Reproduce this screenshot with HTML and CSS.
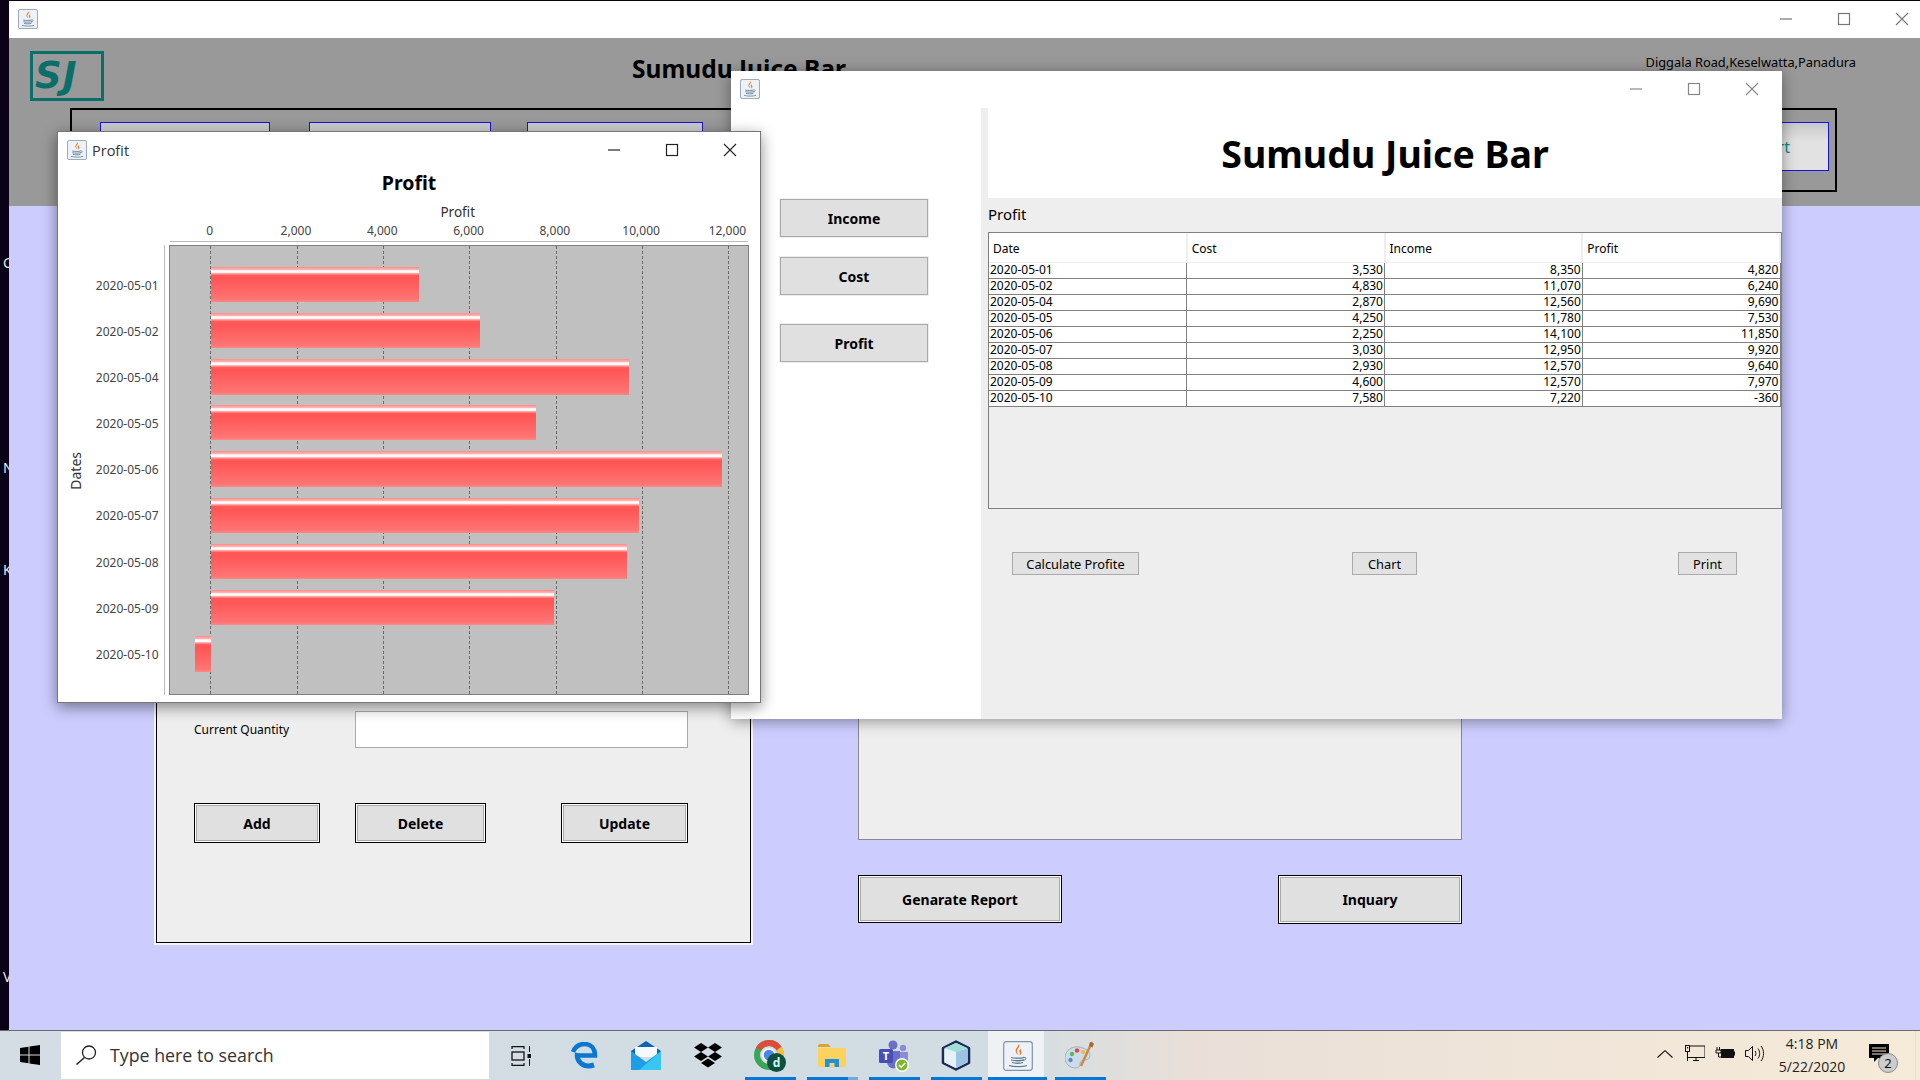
FILE: index.html
```html
<!DOCTYPE html>
<html lang="en">
<head>
<meta charset="utf-8">
<title>Sumudu Juice Bar</title>
<link rel="stylesheet" href="styles.css">
</head>
<body>
<svg class="defs" width="0" height="0" aria-hidden="true">
  <defs>
    <symbol id="java" viewBox="0 0 30 30">
      <rect x="0.7" y="0.7" width="28.6" height="28.6" rx="2.5" fill="#eef2f6" stroke="#7f93aa" stroke-width="1.2"/>
      <path d="M16 3c2 3-3 5-2 8 .4 1.2 1.2 2 1.4 3-2-1.5-3.6-3.400-2.400-6C13.800 6.200 15.600 5 16 3z" fill="#e8761f"/>
      <path d="M18.500 7c-2 1.600-2.800 2.800-1.800 4.600.5 1 .4 2-.4 2.800 2.400-1 2.800-2.800 1.800-4.300-.6-1-.4-2 .4-3.100z" fill="#e8761f"/>
      <path d="M8 16.500c3 1 10 1 13-.2M8 19c3 1 10 1 13-.1M9 21.500c3 1 9 1 11 0" fill="none" stroke="#5c7c94" stroke-width="1.300"/>
      <path d="M21 16.500c2.500-.6 3 2.200-.8 3" fill="none" stroke="#5c7c94" stroke-width="1"/>
      <path d="M6 24.500c5 1.600 14 1.600 18 0" fill="none" stroke="#5c7c94" stroke-width="1.200"/>
    </symbol>
    <symbol id="ctl-min" viewBox="0 0 14 14"><path d="M1 7h12" fill="none" stroke="currentColor" stroke-width="1.200"/></symbol>
    <symbol id="ctl-max" viewBox="0 0 14 14"><rect x="1.500" y="1.500" width="11" height="11" fill="none" stroke="currentColor" stroke-width="1.200"/></symbol>
    <symbol id="ctl-close" viewBox="0 0 14 14"><path d="M1 1l12 12M13 1L1 13" fill="none" stroke="currentColor" stroke-width="1.100"/></symbol>
    <linearGradient id="barfill" x1="0" y1="0" x2="0" y2="1">
      <stop offset="0" stop-color="#ff8a8a"/>
      <stop offset="0.07" stop-color="#ffb0b0"/>
      <stop offset="0.11" stop-color="#ffffff"/>
      <stop offset="0.15" stop-color="#ffffff"/>
      <stop offset="0.19" stop-color="#ffa0a0"/>
      <stop offset="0.24" stop-color="#ff5a5a"/>
      <stop offset="0.32" stop-color="#ff5555"/>
      <stop offset="0.92" stop-color="#ff7474"/>
      <stop offset="1" stop-color="#ff8888"/>
    </linearGradient>
  </defs>
</svg>

<div class="workspace">
  <div class="strip">
    <span class="strip-c">C</span>
    <span class="strip-n">N</span>
    <span class="strip-k">K</span>
    <span class="strip-v">V</span>
  </div>

  <main class="main-window">
    <div class="titlebar">
      <svg class="title-icon"><use href="#java"/></svg>
      <div class="controls controls-main">
        <span class="ctl"><svg><use href="#ctl-min"/></svg></span>
        <span class="ctl"><svg><use href="#ctl-max"/></svg></span>
        <span class="ctl"><svg><use href="#ctl-close"/></svg></span>
      </div>
    </div>

    <header class="app-header">
      <div class="header-top">
        <div class="logo">SJ</div>
        <h1 class="app-title">Sumudu Juice Bar</h1>
        <div class="address">Diggala Road,Keselwatta,Panadura</div>
      </div>
      <nav class="toolbar">
        <button class="nav-btn nav-1"></button>
        <button class="nav-btn nav-2"></button>
        <button class="nav-btn nav-3"></button>
        <button class="nav-btn nav-4"><span>Report</span></button>
      </nav>
    </header>

    <section class="main-body">
      <div class="form-panel">
        <div class="form-row">
          <label class="form-label">Current Quantity</label>
          <div class="form-input"></div>
        </div>
        <div class="form-actions">
          <button class="bevel-btn btn-add">Add</button>
          <button class="bevel-btn btn-delete">Delete</button>
          <button class="bevel-btn btn-update">Update</button>
        </div>
      </div>
      <div class="report-col">
        <div class="report-box"></div>
        <div class="report-actions">
          <button class="bevel-btn btn-report">Genarate Report</button>
          <button class="bevel-btn btn-inquary">Inquary</button>
        </div>
      </div>
    </section>
  </main>
</div>

<section class="income-window">
  <div class="titlebar">
    <svg class="title-icon"><use href="#java"/></svg>
    <div class="controls controls-dim">
      <span class="ctl"><svg><use href="#ctl-min"/></svg></span>
      <span class="ctl"><svg><use href="#ctl-max"/></svg></span>
      <span class="ctl"><svg><use href="#ctl-close"/></svg></span>
    </div>
  </div>
  <div class="income-content">
    <div class="side-menu">
      <button class="side-btn side-income">Income</button>
      <button class="side-btn side-cost">Cost</button>
      <button class="side-btn side-profit">Profit</button>
    </div>
    <div class="profit-pane">
      <div class="banner">Sumudu Juice Bar</div>
      <div class="pane-label">Profit</div>
      <div class="table-box">
        <table class="data-table">
          <thead>
            <tr><th>Date</th><th>Cost</th><th>Income</th><th>Profit</th></tr>
          </thead>
          <tbody>
            <tr><td>2020-05-01</td><td>3,530</td><td>8,350</td><td>4,820</td></tr>
            <tr><td>2020-05-02</td><td>4,830</td><td>11,070</td><td>6,240</td></tr>
            <tr><td>2020-05-04</td><td>2,870</td><td>12,560</td><td>9,690</td></tr>
            <tr><td>2020-05-05</td><td>4,250</td><td>11,780</td><td>7,530</td></tr>
            <tr><td>2020-05-06</td><td>2,250</td><td>14,100</td><td>11,850</td></tr>
            <tr><td>2020-05-07</td><td>3,030</td><td>12,950</td><td>9,920</td></tr>
            <tr><td>2020-05-08</td><td>2,930</td><td>12,570</td><td>9,640</td></tr>
            <tr><td>2020-05-09</td><td>4,600</td><td>12,570</td><td>7,970</td></tr>
            <tr><td>2020-05-10</td><td>7,580</td><td>7,220</td><td>-360</td></tr>
          </tbody>
        </table>
      </div>
      <div class="pane-actions">
        <button class="flat-btn btn-calc">Calculate Profite</button>
        <button class="flat-btn btn-chart">Chart</button>
        <button class="flat-btn btn-print">Print</button>
      </div>
    </div>
  </div>
</section>

<section class="chart-window">
  <div class="titlebar">
    <svg class="title-icon"><use href="#java"/></svg>
    <span class="title-text">Profit</span>
    <div class="controls controls-chart">
      <span class="ctl"><svg><use href="#ctl-min"/></svg></span>
      <span class="ctl"><svg><use href="#ctl-max"/></svg></span>
      <span class="ctl"><svg><use href="#ctl-close"/></svg></span>
    </div>
  </div>
  <div class="chart-title">Profit</div>
  <div class="x-head">
    <div class="x-label">Profit</div>
    <div class="x-ticks">
      <span>0</span><span>2,000</span><span>4,000</span><span>6,000</span><span>8,000</span><span>10,000</span><span>12,000</span>
    </div>
  </div>
  <div class="chart-body">
    <div class="y-label"><span>Dates</span></div>
    <div class="y-cats">
      <span>2020-05-01</span><span>2020-05-02</span><span>2020-05-04</span><span>2020-05-05</span><span>2020-05-06</span><span>2020-05-07</span><span>2020-05-08</span><span>2020-05-09</span><span>2020-05-10</span>
    </div>
    <svg class="plot" viewBox="0 0 580 450" width="580" height="450">
      <rect x="0.500" y="0.500" width="579" height="449" fill="#c0c0c0" stroke="#808080"/>
      <g stroke="#555" stroke-dasharray="3 2" stroke-width="1" opacity="0.8">
        <path d="M41.500 1V449M128.500 1V449M214.500 1V449M300.500 1V449M387.500 1V449M473.500 1V449M559.500 1V449"/>
      </g>
      <g fill="url(#barfill)">
        <rect x="42" y="22" width="208" height="35"/>
        <rect x="42" y="68" width="269" height="35"/>
        <rect x="42" y="114" width="418" height="36"/>
        <rect x="42" y="160" width="325" height="35"/>
        <rect x="42" y="206" width="511" height="36"/>
        <rect x="42" y="253" width="428" height="35"/>
        <rect x="42" y="299" width="416" height="35"/>
        <rect x="42" y="345" width="343" height="35"/>
        <rect x="26" y="391" width="16" height="36"/>
      </g>
    </svg>
  </div>
</section>

<footer class="taskbar">
  <div class="start">
    <svg width="20" height="20" viewBox="0 0 20 20"><path d="M0 3l8.500-1.200V9.500H0zM9.500 1.600L20 0v9.500H9.500zM0 10.500h8.500v7.700L0 17zM9.500 10.500H20V20L9.500 18.400z" fill="#000"/></svg>
  </div>
  <div class="search">
    <svg width="22" height="20" viewBox="0 0 22 20"><circle cx="14" cy="7.500" r="6.500" fill="none" stroke="#222" stroke-width="1.300"/><path d="M9.500 12.500L1.500 19.500" stroke="#222" stroke-width="1.500"/></svg>
    <span>Type here to search</span>
  </div>
  <div class="app app-view">
    <svg width="20" height="20" viewBox="0 0 20 20"><path d="M1 3V.7h12V3M1 17v2.300h12V17" fill="none" stroke="#111" stroke-width="1.200"/><rect x="1" y="6" width="12" height="8" fill="none" stroke="#111" stroke-width="1.300"/><path d="M18.500 0v6M18.500 13v7" stroke="#111"/><rect x="16.500" y="8" width="4" height="4" fill="#111"/></svg>
  </div>
  <div class="app">
    <svg width="27" height="27" viewBox="0 0 27 27"><path d="M7.500 13.500H24C24 6 19.500 2 13.500 2 8 2 4 5 2 10" fill="none" stroke="#0a78d2" stroke-width="4.500"/><path d="M6.500 11C5 19 12 26.500 23 23" fill="none" stroke="#0a78d2" stroke-width="5"/></svg>
  </div>
  <div class="app">
    <svg width="30" height="29" viewBox="0 0 30 29"><path d="M0 10L15 0l15 10v3H0z" fill="#0b64b4"/><path d="M4 6h22v10H4z" fill="#f5f9fc"/><path d="M0 10l15 11 15-11v19H0z" fill="#1b9fe6"/><path d="M30 10v19H8z" fill="#38c6f4"/></svg>
  </div>
  <div class="app">
    <svg width="30" height="25" viewBox="0 0 30 25"><path d="M8 0l7 4.500L8 9 1 4.500zM22 0l7 4.500L22 9l-7-4.500zM8 9l7 4.500L8 18l-7-4.500zM22 9l7 4.500L22 18l-7-4.500zM15 15.500l7 4.500-7 4.500L8 20z" fill="#000"/></svg>
  </div>
  <div class="app running">
    <svg width="32" height="32" viewBox="0 0 32 32"><circle cx="15" cy="15" r="12" fill="none" stroke="#3aa655" stroke-width="6"/><path d="M4.600 9A12 12 0 0 1 25.400 9" fill="none" stroke="#e04a3a" stroke-width="6"/><path d="M25 8.500A12 12 0 0 1 27 17" fill="none" stroke="#f5c33b" stroke-width="6"/><circle cx="15" cy="15" r="6" fill="#4a86e8" stroke="#fff" stroke-width="1.500"/><circle cx="22.500" cy="22.500" r="9.500" fill="#0f4f3f"/><text x="22.500" y="27" class="badge-d">d</text></svg>
  </div>
  <div class="app running part">
    <svg width="28" height="23" viewBox="0 0 28 23"><path d="M0 2a2 2 0 0 1 2-2h8l3 3H0z" fill="#e2a41f"/><path d="M0 4h28v17a2 2 0 0 1-2 2H2a2 2 0 0 1-2-2z" fill="#fbd35c"/><path d="M7 23V15h14v8h-4.500v-4h-5v4z" fill="#1f8fe0"/></svg>
  </div>
  <div class="app running">
    <svg width="32" height="32" viewBox="0 0 32 32"><circle cx="15" cy="5" r="4.500" fill="#6b6fc6"/><circle cx="25" cy="8" r="3.200" fill="#8a8dd6"/><path d="M20 12h10v9a5 5 0 0 1-10 0z" fill="#8a8dd6"/><path d="M9 11h13v11a6.500 6.500 0 0 1-13 0z" fill="#6b6fc6"/><rect x="1" y="9" width="14" height="14" rx="1.500" fill="#464eb8"/><text x="8" y="20" class="badge-t">T</text><circle cx="24" cy="25" r="7" fill="#fff"/><circle cx="24" cy="25" r="5.500" fill="#7cb82f"/><path d="M21 25l2.200 2.200 4-4.200" fill="none" stroke="#fff" stroke-width="1.500"/></svg>
  </div>
  <div class="app running">
    <svg width="30" height="31" viewBox="0 0 30 31"><path d="M15 1.500L28 8v15l-13 6.500L2 23V8z" fill="#cfe3ee" stroke="#1b2a55" stroke-width="2.500" stroke-linejoin="round"/><path d="M15 12L3.500 8 15 3l11.500 5z" fill="#9fe0d8"/><path d="M15 12v16L3.500 22.500V8.500z" fill="#e6f1f6"/><path d="M15 12v16l11.500-5.500V8.500z" fill="#9cc4e2"/></svg>
  </div>
  <div class="app running active">
    <svg width="30" height="30"><use href="#java"/></svg>
  </div>
  <div class="app running">
    <svg width="30" height="29" viewBox="0 0 30 29"><path d="M14 6C6 5 0 10 0 17c0 6 5 10 11 10 4 0 4-3 4-5s2-3 5-3c3 0 5-2 5-5 0-4-5-7-11-8z" fill="#cfdbe6" stroke="#8aa0b4" stroke-width=".7"/><circle cx="7" cy="13" r="2.200" fill="#5cb85c"/><circle cx="12" cy="9.500" r="2.200" fill="#e04a3a"/><circle cx="5.500" cy="19" r="2.200" fill="#4a90d9"/><circle cx="18" cy="11" r="2" fill="#f0b93a"/><path d="M27 1L16 25" stroke="#c98a4a" stroke-width="2.500"/><path d="M25 1l4 1.500-1.500 4-3.500-1.500z" fill="#a06a30"/></svg>
  </div>

  <div class="tray">
    <svg class="tray-chevron" width="16" height="8" viewBox="0 0 16 8"><path d="M.5 7.500L8 .7l7.500 6.800" fill="none" stroke="#111" stroke-width="1.100"/></svg>
    <svg class="tray-net" width="20" height="16" viewBox="0 0 20 16"><path d="M.5 1H20v11.500H2.500" fill="none" stroke="#111"/><rect x=".5" y=".5" width="4" height="6" fill="#f5ead8" stroke="#111"/><rect x="2" y="2" width="1.200" height="1.500" fill="#111"/><path d="M2.500 6.500V16M8 15.500h6M11 12.500v3" fill="none" stroke="#111"/></svg>
    <svg class="tray-batt" width="20" height="13" viewBox="0 0 20 13"><path d="M2 0v3M4.500 0v3M1 3h5v3H1zM3.500 6v4H6" fill="none" stroke="#111"/><rect x="6" y="2" width="13" height="9" fill="#111"/><rect x="19" y="4.500" width="1" height="4" fill="#111"/></svg>
    <svg class="tray-vol" width="20" height="17" viewBox="0 0 20 17"><path d="M.5 5.500h3l4-4v14l-4-4h-3z" fill="none" stroke="#111"/><path d="M10 6c1.200 1.500 1.200 3.500 0 5M13 3.500c2.200 3 2.200 7 0 10M16 1c3.400 4.500 3.400 10.500 0 15" fill="none" stroke="#111"/></svg>
    <div class="clock"><span>4:18 PM</span><span>5/22/2020</span></div>
    <div class="notify">
      <svg width="20" height="18" viewBox="0 0 20 18"><path d="M0 0h20v14H9l-4 4v-4H0z" fill="#000"/><path d="M3 4h14M3 7h14M3 10h14" stroke="#f5ead8"/></svg>
      <span class="notify-badge">2</span>
    </div>
    <div class="show-desktop"></div>
  </div>
</footer>
</body>
</html>
```
FILE: styles.css
```css
* { box-sizing: border-box; }
html, body { margin: 0; padding: 0; }
body {
  position: relative;
  width: 1920px;
  height: 1080px;
  overflow: hidden;
  display: flex;
  flex-direction: column;
  background: #0a0318;
  font-family: "Noto Sans", "DejaVu Sans", sans-serif;
  color: #000;
}
.defs { position: absolute; }
button { font-family: inherit; padding: 0; margin: 0; color: #000; }

.workspace { display: flex; height: 1030px; padding-top: 1px; }
.strip { position: relative; width: 9px; overflow: hidden; color: #e8e8e8; font-size: 14px; }
.strip span { position: absolute; left: 3px; }
.strip-c { top: 252px; }
.strip-n { top: 457px; }
.strip-k { top: 559px; }
.strip-v { top: 966px; }

/* Windows */
.titlebar { display: flex; align-items: center; height: 37px; background: #fff; padding: 0 0 2px 9px; flex: none; }
.title-icon { width: 20px; height: 20px; flex: none; }
.title-text { margin-left: 5px; padding-top: 2px; font-family: "Open Sans", sans-serif; font-size: 14.500px; color: #333; }
.controls { display: flex; margin-left: auto; color: #222; }
.ctl { width: 58px; display: flex; justify-content: center; align-items: center; }
.ctl svg { width: 14px; height: 14px; }
.controls-main { color: #777; margin-right: -11px; }
.controls-dim { color: #888; margin-right: 1px; }
.controls-chart { margin-right: 1px; }

/* Main window */
.main-window { flex: 1; display: flex; flex-direction: column; min-width: 0; }
.app-header { height: 168px; background: #999; flex: none; }
.header-top { display: flex; align-items: flex-start; height: 70px; padding: 13px 64px 0 21px; }
.logo {
  width: 74px; height: 50px;
  border: 3px solid #0a6e69;
  color: #0a6e69;
  font-family: "DejaVu Sans", sans-serif;
  font-weight: bold;
  font-style: italic;
  font-size: 37px;
  line-height: 44px;
  letter-spacing: 1px;
  padding-left: 2px;
}
.app-title {
  margin: 0 0 0 528px;
  font-size: 24.500px;
  line-height: 36px;
  font-weight: bold;
  color: #000;
}
.address { margin: 3px 0 0 auto; font-size: 12.800px; line-height: 16px; color: #000; }
.toolbar {
  display: flex;
  margin-left: 61px;
  width: 1767px;
  height: 84px;
  border: 2px solid #000;
  padding: 12px 6px 0 28px;
}
.nav-btn {
  height: 49px;
  border: 1px solid #1414e0;
  background: linear-gradient(#c8c8c8, #e2e2e2 40%);
  color: #0a8a85;
  font-size: 16px;
}
.nav-1 { width: 170px; }
.nav-2 { width: 182px; margin-left: 39px; }
.nav-3 { width: 176px; margin-left: 36px; }
.nav-4 { width: 208px; margin-left: auto; text-align: right; padding-right: 38px; }

.main-body { flex: 1; display: flex; background: #ccf; padding: 16px 0 0 147px; gap: 107px; }
.form-panel {
  width: 595px;
  margin-bottom: 87px;
  border: 1px solid #000;
  box-shadow: 0 0 0 2px #f3f3f8;
  background: #eee;
  padding: 0 0 99px 37px;
  display: flex;
  flex-direction: column;
  justify-content: flex-end;
}
.form-row { display: flex; align-items: center; }
.form-label { width: 161px; font-size: 12px; }
.form-input { width: 333px; height: 37px; background: #fff; border: 1px solid #aaa; }
.form-actions { display: flex; margin-top: 55px; }
.bevel-btn {
  height: 40px;
  border: 1px solid #000;
  box-shadow: inset 0 0 0 1px #fff, inset 0 0 0 2px #aaa;
  background: #e0e0e0;
  font-size: 14px;
  font-weight: bold;
}
.btn-add { width: 126px; }
.btn-delete { width: 131px; margin-left: 35px; }
.btn-update { width: 127px; margin-left: 75px; }
.report-col { width: 604px; display: flex; flex-direction: column; padding-bottom: 106px; }
.report-box { flex: 1; background: #eee; border: 1px solid #888; }
.report-actions { display: flex; justify-content: space-between; align-items: flex-start; margin-top: 35px; height: 49px; }
.btn-report { width: 204px; height: 48px; }
.btn-inquary { width: 184px; height: 49px; }

/* Income window */
.income-window {
  position: absolute;
  left: 731px; top: 71px;
  width: 1051px; height: 648px;
  background: #fff;
  display: flex;
  flex-direction: column;
  box-shadow: 0 2px 14px rgba(0, 0, 0, 0.4);
}
.income-content { flex: 1; display: flex; min-height: 0; }
.side-menu { width: 250px; padding: 91px 0 0 49px; display: flex; flex-direction: column; flex: none; }
.side-btn {
  width: 148px; height: 38px;
  background: #e0e0e0;
  border: 1px solid #aaa;
  box-shadow: 0 0 0 1px #eee;
  font-size: 14px;
  font-weight: bold;
}
.side-cost { margin-top: 20px; }
.side-profit { margin-top: 29px; }
.profit-pane { flex: 1; background: #eee; border-left: 7px solid #eee; display: flex; flex-direction: column; }
.banner {
  height: 90px;
  background: #fff;
  font-size: 37.500px;
  font-weight: bold;
  text-align: center;
  line-height: 92px;
  flex: none;
}
.pane-label { height: 34px; font-size: 15px; line-height: 32px; color: #000; flex: none; }
.table-box { width: 794px; height: 277px; border: 1px solid #808080; flex: none; }
.data-table { width: 100%; border-collapse: collapse; table-layout: fixed; font-size: 12px; }
.data-table th {
  height: 29px;
  background: #fff;
  font-weight: normal;
  text-align: left;
  padding: 2px 0 0 4px;
  border-right: 2px solid #eee;
  border-bottom: 1px solid #eee;
}
.data-table td {
  height: 16px;
  padding: 0 1px 1px;
  line-height: 14px;
  background: #fff;
  text-align: right;
  border-right: 1px solid #808080;
  border-bottom: 1px solid #808080;
}
.data-table td:first-child { text-align: left; }
.pane-actions { display: flex; padding-top: 43px; padding-left: 24px; }
.flat-btn { height: 23px; background: #e2e2e2; border: 1px solid #aaa; font-size: 12.800px; }
.btn-calc { width: 127px; }
.btn-chart { width: 65px; margin-left: 213px; }
.btn-print { width: 59px; margin-left: 261px; }

/* Chart window */
.chart-window {
  position: absolute;
  left: 57px; top: 131px;
  width: 704px; height: 572px;
  background: #fff;
  border: 1px solid #777;
  box-shadow: 0 4px 14px rgba(0, 0, 0, 0.45);
}
.chart-title { height: 27px; line-height: 27px; text-align: center; font-size: 19.500px; font-weight: bold; }
.x-head { margin: 8px 12px 0 111.500px; height: 38px; border-bottom: 1px solid #bbb; }
.x-label { height: 18px; line-height: 16px; padding-right: 2px; text-align: center; font-size: 13.500px; color: #333; }
.x-ticks { display: flex; margin-left: -3px; height: 19px; line-height: 18px; font-size: 12px; color: #444; }
.x-ticks span { flex: none; width: 86.300px; text-align: center; }
.chart-body { display: flex; margin-top: 3px; height: 450px; }
.y-label { width: 35px; display: flex; align-items: center; justify-content: center; font-size: 14px; color: #333; padding-top: 1px; }
.y-label span { writing-mode: vertical-rl; transform: rotate(180deg); }
.y-cats {
  width: 72px;
  padding: 18px 5.500px 0 0;
  border-right: 1px solid #bbb;
  display: flex;
  flex-direction: column;
  font-size: 12px;
  color: #444;
}
.y-cats span { flex: none; height: 46.100px; line-height: 46.100px; text-align: right; }
.plot { margin-left: 3.500px; flex: none; display: block; }

/* Taskbar */
.taskbar {
  height: 50px;
  flex: none;
  display: flex;
  align-items: stretch;
  border-top: 1px solid #6a6a72;
  background: linear-gradient(90deg, #d4dde3 0, #d1dde3 52%, #e9dfd8 62%, #f6ebd8 100%);
}
.start { width: 61px; padding: 0 2px 2px 0; display: flex; align-items: center; justify-content: center; flex: none; }
.search {
  width: 428px;
  margin: 1px 0;
  background: #fff;
  display: flex;
  align-items: center;
  padding: 0 0 2px 14px;
  flex: none;
  font-family: "Open Sans", sans-serif;
  font-size: 17.800px;
  color: #333;
}
.search span { margin-left: 13px; }
.app { position: relative; width: 62px; display: flex; align-items: center; justify-content: center; flex: none; }
.app-view { width: 64px; }
.running::after { content: ""; position: absolute; left: 5.500px; bottom: 0; width: 51px; height: 3px; background: #0078d7; }
.part::after { background: linear-gradient(90deg, #0078d7 80%, #6aaee0 80%); }
.active { background: linear-gradient(#eef2f5, #eef2f5) no-repeat 1px 0 / 56px 100%; }
.active::after { left: 1px; width: 59px; }
.badge-d { font: bold 12px "Noto Sans", sans-serif; fill: #cfe; text-anchor: middle; }
.badge-t { font: bold 11px "Noto Sans", sans-serif; fill: #fff; text-anchor: middle; }
.tray { margin-left: auto; display: flex; align-items: center; color: #111; }
.tray-chevron { margin-top: -3px; }
.tray-net { margin-left: 12px; margin-top: -5px; }
.tray-batt { margin-left: 10px; margin-top: -5px; }
.tray-vol { margin-left: 10px; margin-top: -5px; }
.clock {
  width: 84px;
  margin-left: 5px;
  display: flex;
  flex-direction: column;
  align-items: center;
  gap: 3px;
  font-family: "Open Sans", sans-serif;
  font-size: 14px;
  line-height: 20px;
  color: #222;
}
.notify { position: relative; width: 20px; height: 18px; margin: -5px 26px 0 15px; }
.notify svg { display: block; }
.notify-badge {
  position: absolute;
  left: 9px; top: 9px;
  width: 20px; height: 20px;
  border-radius: 50%;
  background: #ccc;
  border: 1px solid #888;
  font-size: 13px;
  line-height: 18px;
  text-align: center;
}
.show-desktop { width: 5px; align-self: stretch; border-left: 1px solid #ddd; }
```
